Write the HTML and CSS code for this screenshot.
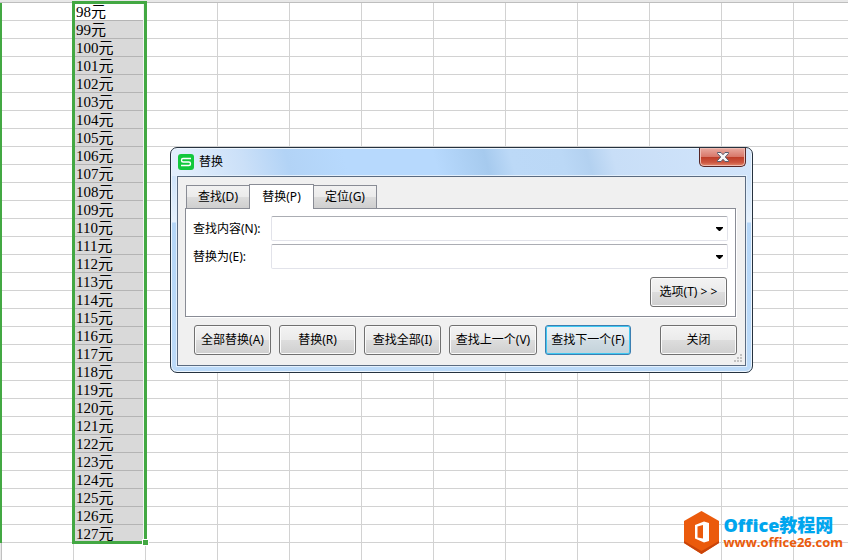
FILE: index.html
```html
<!DOCTYPE html>
<html lang="zh-CN">
<head>
<meta charset="utf-8">
<title>替换</title>
<link rel="stylesheet" href="styles.css">
</head>
<body>
<main class="sheet">
  <table class="grid">
    <colgroup><col class="col-edge"><col class="col-cell"><col class="col-cell"><col></colgroup>
    <thead><tr><th></th><th></th><th></th><th></th></tr></thead>
    <tbody>
      <tr><td></td><td></td><td>98元</td><td></td></tr>
      <tr><td></td><td></td><td>99元</td><td></td></tr>
      <tr><td></td><td></td><td>100元</td><td></td></tr>
      <tr><td></td><td></td><td>101元</td><td></td></tr>
      <tr><td></td><td></td><td>102元</td><td></td></tr>
      <tr><td></td><td></td><td>103元</td><td></td></tr>
      <tr><td></td><td></td><td>104元</td><td></td></tr>
      <tr><td></td><td></td><td>105元</td><td></td></tr>
      <tr><td></td><td></td><td>106元</td><td></td></tr>
      <tr><td></td><td></td><td>107元</td><td></td></tr>
      <tr><td></td><td></td><td>108元</td><td></td></tr>
      <tr><td></td><td></td><td>109元</td><td></td></tr>
      <tr><td></td><td></td><td>110元</td><td></td></tr>
      <tr><td></td><td></td><td>111元</td><td></td></tr>
      <tr><td></td><td></td><td>112元</td><td></td></tr>
      <tr><td></td><td></td><td>113元</td><td></td></tr>
      <tr><td></td><td></td><td>114元</td><td></td></tr>
      <tr><td></td><td></td><td>115元</td><td></td></tr>
      <tr><td></td><td></td><td>116元</td><td></td></tr>
      <tr><td></td><td></td><td>117元</td><td></td></tr>
      <tr><td></td><td></td><td>118元</td><td></td></tr>
      <tr><td></td><td></td><td>119元</td><td></td></tr>
      <tr><td></td><td></td><td>120元</td><td></td></tr>
      <tr><td></td><td></td><td>121元</td><td></td></tr>
      <tr><td></td><td></td><td>122元</td><td></td></tr>
      <tr><td></td><td></td><td>123元</td><td></td></tr>
      <tr><td></td><td></td><td>124元</td><td></td></tr>
      <tr><td></td><td></td><td>125元</td><td></td></tr>
      <tr><td></td><td></td><td>126元</td><td></td></tr>
      <tr><td></td><td></td><td>127元</td><td></td></tr>
    </tbody>
    <tfoot><tr><td></td><td></td><td></td><td></td></tr></tfoot>
  </table>
  <div class="selection"><span class="fill-handle"></span></div>
</main>

<section class="dialog" role="dialog" aria-labelledby="dialog-title">
  <header class="titlebar">
    <svg class="app-icon" viewBox="0 0 16 16" aria-hidden="true">
      <rect width="16" height="16" rx="3" fill="#12c83c"/>
      <path d="M13 4.500H5Q3.500 4.500 3.500 6.200Q3.500 8 5.200 8H10.800Q12.500 8 12.500 9.700Q12.500 11.500 10.800 11.500H3" fill="none" stroke="#fff" stroke-width="1.400"/>
    </svg>
    <h1 class="title" id="dialog-title">替换</h1>
    <button class="close" type="button" aria-label="关闭窗口">
      <svg viewBox="0 0 12 10" aria-hidden="true">
        <path d="M.5.5H4L6 2.700 8 .5h3.500v1L8.300 5l3.200 3.500v1H8L6 7.300 4 9.500H.5v-1L3.700 5 .5 1.500z" fill="#f6f6f6" stroke="#555a6c"/>
      </svg>
    </button>
  </header>
  <form class="client">
    <div class="tabs" role="tablist">
      <button class="tab" type="button" role="tab">查找(D)</button>
      <button class="tab tab-active" type="button" role="tab" aria-selected="true">替换(P)</button>
      <button class="tab" type="button" role="tab">定位(G)</button>
    </div>
    <div class="panel">
      <div class="field">
        <label for="find">查找内容(N):</label>
        <div class="combo">
          <input id="find" type="text">
          <button type="button" aria-label="展开查找记录"><svg viewBox="0 0 7 4" aria-hidden="true"><path d="M0 0h7v1L4 4H3L0 1z"/></svg></button>
        </div>
      </div>
      <div class="field">
        <label for="replace">替换为(E):</label>
        <div class="combo">
          <input id="replace" type="text">
          <button type="button" aria-label="展开替换记录"><svg viewBox="0 0 7 4" aria-hidden="true"><path d="M0 0h7v1L4 4H3L0 1z"/></svg></button>
        </div>
      </div>
      <button class="btn options" type="button">选项(T) &gt; &gt;</button>
    </div>
    <div class="actions">
      <button class="btn" type="button">全部替换(A)</button>
      <button class="btn" type="button">替换(R)</button>
      <button class="btn" type="button">查找全部(I)</button>
      <button class="btn btn-wide" type="button">查找上一个(V)</button>
      <button class="btn btn-wide btn-default" type="button">查找下一个(F)</button>
      <button class="btn btn-last" type="button">关闭</button>
    </div>
    <svg class="grip" viewBox="0 0 9 9" aria-hidden="true">
      <path d="M6 0h2v2H6zM3 3h2v2H3zM6 3h2v2H6zM0 6h2v2H0zM3 6h2v2H3zM6 6h2v2H6z" fill="#c2c2c2"/>
    </svg>
  </form>
</section>

<aside class="brand">
  <svg class="brand-logo" viewBox="0 0 35 43" aria-hidden="true">
    <path d="M17.500 0 35 10V32L17.500 43 0 32V10z" fill="#eb5a0c"/>
    <path d="M0 30 17.500 40 35 30v2L17.500 43 0 32z" fill="#c9440a"/>
    <path d="M11 14 20 10.500l5 1.500v18l-5 1.500-9-4zM13.500 15.500v11l5.500 1V14z" fill="#fff" fill-rule="evenodd"/>
  </svg>
  <div class="brand-text">
    <strong class="brand-name">Office教程网</strong>
    <span class="brand-url">www.office26.com</span>
  </div>
</aside>
</body>
</html>
```
FILE: styles.css
```css
* { box-sizing: border-box; }

body {
  margin: 0;
  min-height: 100vh;
  position: relative;
  overflow: hidden;
  background: #fff;
  color: #000;
  font: 12px/16px "Noto Sans", "Noto Sans CJK SC", sans-serif;
}

button, input { font: inherit; color: inherit; margin: 0; }

/* Spreadsheet */
.sheet { position: relative; height: 100vh; overflow: hidden; }

.grid {
  width: 100%;
  table-layout: fixed;
  border-collapse: separate;
  border-spacing: 0;
  font: 15px/15px "Liberation Serif", "Noto Sans CJK SC", serif;
}
.col-edge { width: 2px; }
.col-cell { width: 72px; }

.grid th {
  height: 3px;
  padding: 0;
  background: #e8e8e8;
  border-bottom: 1px solid #bebebe;
}
.grid td {
  height: 18px;
  padding: 2px 0 0;
  white-space: nowrap;
  border-right: 1px solid #d2d2d2;
  border-bottom: 1px solid #d2d2d2;
}
.grid td:first-child { border-color: #c0c0c0; background: #e8e8e8; }
.grid tbody td:first-child { border-color: #43a843; background: #43a843; }
.grid td:nth-child(3) { padding-left: 2px; }
.grid tbody td:nth-child(3) { background: #d9d9d9; border-bottom-color: #b4b4b4; }
.grid tbody tr:first-child td:nth-child(3) { background: #fff; }
.grid td:last-child {
  border-right: 0;
  background: repeating-linear-gradient(to right, transparent 0 71px, #d2d2d2 71px 72px);
}

.selection {
  position: absolute;
  left: 72px;
  top: 1px;
  width: 75px;
  height: 543px;
  border: 3px solid #43a843;
  box-shadow: inset -1px 0 0 #f4f4f4;
}
.fill-handle {
  position: absolute;
  right: -5px;
  bottom: -5px;
  width: 7px;
  height: 7px;
  background: #43a843;
  border: 1px solid #fff;
}

/* Dialog */
.dialog {
  position: absolute;
  left: 170px;
  top: 147px;
  width: 583px;
  padding: 0 6px 6px;
  border: 1px solid #26323f;
  border-radius: 7px;
  background: linear-gradient(to bottom, transparent 0 28px, #cfe4fa 28px, #e6f1fc 74px, #b5d6f7 75px, #bcdaf8),
    linear-gradient(75deg, #d3e5fa 0, #e2eefc 10%, #cbe0f8 20%, #b2d3f6 27%, #b7d9fd 36%, #b7d9fd 50%, #a6caee 58%, #bcd9f7 62%, #bbd8f6 70%, #b3d1f0 74%, #c8def7 78%, #d2e5fb);
  box-shadow: inset 0 0 0 1px #eef6fe;
}

.titlebar { display: flex; align-items: center; height: 28px; }
.app-icon { width: 16px; height: 16px; margin-left: 1px; }
.title { margin: 0 auto 0 5px; font-size: 12px; font-weight: 400; }
.close {
  align-self: flex-start;
  display: grid;
  place-items: center;
  width: 47px;
  height: 19px;
  padding: 0;
  border: 1px solid #562525;
  border-top: 0;
  border-radius: 0 0 5px 5px;
  background: linear-gradient(#e9aaa0, #d8786a 48%, #bd3c27 50%, #cc5640 80%, #e28b6d);
  box-shadow: inset 0 0 0 1px #efbcb3;
}
.close svg { width: 12px; height: 10px; }

.client {
  position: relative;
  padding: 7px 8px 10px 7px;
  border: 1px solid #5b6b80;
  background: #f0f0f0;
  box-shadow: 0 0 0 1px #e3f0fd;
}

.tabs { display: flex; align-items: flex-end; padding-left: 1px; }
.tab {
  width: 64px;
  height: 23px;
  padding: 0;
  border: 1px solid #898c95;
  border-bottom: 0;
  background: linear-gradient(#f2f2f2, #ebebeb 48%, #dcdcdc 52%, #cfcfcf);
}
.tab + .tab { margin-left: -1px; }
.tab-active {
  position: relative;
  z-index: 1;
  width: 65px;
  height: 25px;
  margin-bottom: -1px;
  padding-bottom: 1px;
  background: #fff;
}

.panel {
  display: flex;
  flex-direction: column;
  gap: 3px;
  margin-right: 1px;
  padding: 7px 7px 9px 7px;
  border: 1px solid #898c95;
  background: #fff;
  box-shadow: 1px 1px 0 #fff;
}
.field { display: flex; align-items: center; }
.field label { flex: 0 0 78px; }
.combo {
  flex: 1;
  display: flex;
  height: 25px;
  border: 1px solid #e2e3ea;
  border-top-color: #abadb3;
  border-radius: 2px;
  background: #fff;
}
.combo input { flex: 1; min-width: 0; padding: 0 4px; border: 0; outline: 0; background: none; }
.combo button { display: grid; place-items: center; width: 15px; padding: 0; border: 0; background: none; }
.combo svg { width: 7px; height: 4px; }

.btn {
  width: 77px;
  height: 30px;
  padding: 0;
  border: 1px solid #707070;
  border-radius: 3px;
  background: linear-gradient(#f3f3f3, #ebebeb 49%, #dddddd 51%, #cfcfcf);
  box-shadow: inset 0 0 0 1px #fafafa;
  white-space: nowrap;
}
.options { align-self: flex-end; margin: 5px 1px 0 0; }

.actions { display: flex; gap: 8px; padding: 8px 0 0 9px; }
.btn-wide { width: 88px; }
.btn-default {
  width: 86px;
  border-color: #3c7fb1;
  background: linear-gradient(#eef3f6, #e2eaef 49%, #d0dce3 51%, #c3d2da);
  box-shadow: inset 0 0 0 1px #3fc8f2;
}
.btn-last { margin-left: auto; }
.grip { position: absolute; right: 2px; bottom: 2px; width: 9px; height: 9px; }

/* Site mark */
.brand { position: absolute; right: 5px; bottom: 6px; display: flex; align-items: center; gap: 4px; }
.brand-logo { width: 35px; height: 43px; }
.brand-text {
  display: flex;
  flex-direction: column;
  gap: 2px;
  font-family: "Open Sans", "Noto Sans CJK SC", sans-serif;
  font-weight: 700;
}
.brand-name { font-size: 18px; line-height: 18px; color: #00a6ee; }
.brand-url { font-size: 13px; line-height: 13px; color: #ea5b0c; }
```
